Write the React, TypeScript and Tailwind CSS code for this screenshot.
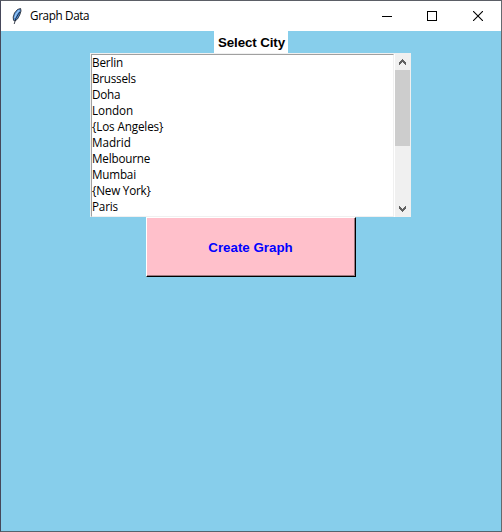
const cities = [
  { name: 'Berlin', tracking: 'tracking-[-0.15px]' },
  { name: 'Brussels', tracking: 'tracking-[-0.25px]' },
  { name: 'Doha', tracking: 'tracking-[-0.2px]' },
  { name: 'London', tracking: 'tracking-[-0.1px]' },
  { name: '{Los Angeles}', tracking: 'tracking-[-0.14px]' },
  { name: 'Madrid', tracking: 'tracking-[-0.05px]' },
  { name: 'Melbourne', tracking: 'tracking-[-0.2px]' },
  { name: 'Mumbai', tracking: 'tracking-[-0.2px]' },
  { name: '{New York}', tracking: 'tracking-[-0.2px]' },
  { name: 'Paris', tracking: 'tracking-[-0.2px]' },
];

function Feather() {
  return (
    <svg width="10" height="17" viewBox="0 0 10 17" className="shrink-0">
      <path d="M8.6 0.5 L5.5 1.5 L2.5 5 L1.2 9 L1.5 12.3 L3 13 L5.5 11 L7.7 7 L9 3Z" fill="#4d8fdc" stroke="#2a2f38" strokeWidth="0.9" />
      <path d="M7.3 2.2 L4 6.2 L2.7 10" fill="none" stroke="#9fcbf5" strokeWidth="1.3" />
      <path d="M7.7 4 L4 10 L2.2 16" fill="none" stroke="#111827" strokeWidth="0.8" />
    </svg>
  );
}

function TitleBar() {
  return (
    <header className="flex h-[30px] items-center bg-white pl-[11px] text-black">
      <Feather />
      <h1 className="ml-[8px] flex-1 whitespace-nowrap pb-[2px] text-[11.7px] leading-4 tracking-[-0.35px]">Graph Data</h1>
      <div className="flex">
        <button aria-label="Minimize" className="flex h-[30px] w-[46px] items-center justify-center">
          <svg width="10" height="10" shapeRendering="crispEdges"><rect y="5" width="10" height="1" /></svg>
        </button>
        <button aria-label="Maximize" className="flex h-[30px] w-[45px] items-center justify-center pr-px">
          <svg width="10" height="10"><rect x="0.5" y="0.5" width="9" height="9" fill="none" stroke="#000" /></svg>
        </button>
        <button aria-label="Close" className="flex h-[30px] w-[46px] items-center justify-center">
          <svg width="10" height="10"><path d="M0 0L10 10M10 0L0 10" fill="none" stroke="#000" strokeWidth="1.1" /></svg>
        </button>
      </div>
    </header>
  );
}

function Scrollbar() {
  return (
    <div className="flex w-[16px] flex-col bg-[#f0f0f0]">
      <div className="flex h-[17px] justify-center pt-[6px] pr-px">
        <svg width="7" height="6" shapeRendering="crispEdges">
          <path d="M3 0h1v1h1v1h1v1h1v3h-1v-1h-1v-1h-1v-1h-1v1h-1v1h-1v1h-1v-3h1v-1h1v-1h1z" fill="#606060" />
        </svg>
      </div>
      <div className="h-[76px] w-[15px] bg-[#cdcdcd]" />
      <div className="flex-1" />
      <div className="flex h-[17px] justify-center pt-[6px] pr-px">
        <svg width="7" height="6" shapeRendering="crispEdges">
          <path d="M3 6h1v-1h1v-1h1v-1h1v-3h-1v1h-1v1h-1v1h-1v-1h-1v-1h-1v-1h-1v3h1v1h1v1h1z" fill="#606060" />
        </svg>
      </div>
    </div>
  );
}

export default function App() {
  return (
    <div className="h-[532px] w-[502px] overflow-hidden border border-t-[#5b5e66] border-r-[#65696e] border-b-[#53646f] border-l-[#46485a] bg-[#87ceeb] font-['Open_Sans','Noto_Sans',sans-serif]">
      <TitleBar />
      <main className="flex flex-col items-center">
        <div className="flex h-[22px] w-[74px] items-center justify-center bg-white pt-px pl-px font-['Liberation_Sans',Arial,sans-serif] text-[13.33px] font-bold tracking-[-0.1px] whitespace-nowrap text-black">
          Select City
        </div>
        <div className="mr-px flex h-[164px] w-[321px]">
          <div className="flex w-[305px] border-t border-l border-[#f0f0f0] bg-white">
            <ul className="w-[303px] border border-t-[#a0a0a0] border-r-[#f0f0f0] border-b-[#f0f0f0] border-l-[#a0a0a0] text-[11.7px] leading-[14px] text-black">
              {cities.map((c) => (
                <li key={c.name} className={`h-4 whitespace-nowrap ${c.tracking}`}>{c.name}</li>
              ))}
            </ul>
          </div>
          <Scrollbar />
        </div>
        <button className="h-[60px] w-[210px] border border-t-white border-r-black border-b-black border-l-white bg-[#ffc0cb]">
          <span className="flex h-full items-center justify-center border-r border-b border-[#9d787e] pt-[2px] font-['Liberation_Sans',Arial,sans-serif] text-[13.33px] font-bold text-[#0000ff]">
            Create Graph
          </span>
        </button>
      </main>
    </div>
  );
}
